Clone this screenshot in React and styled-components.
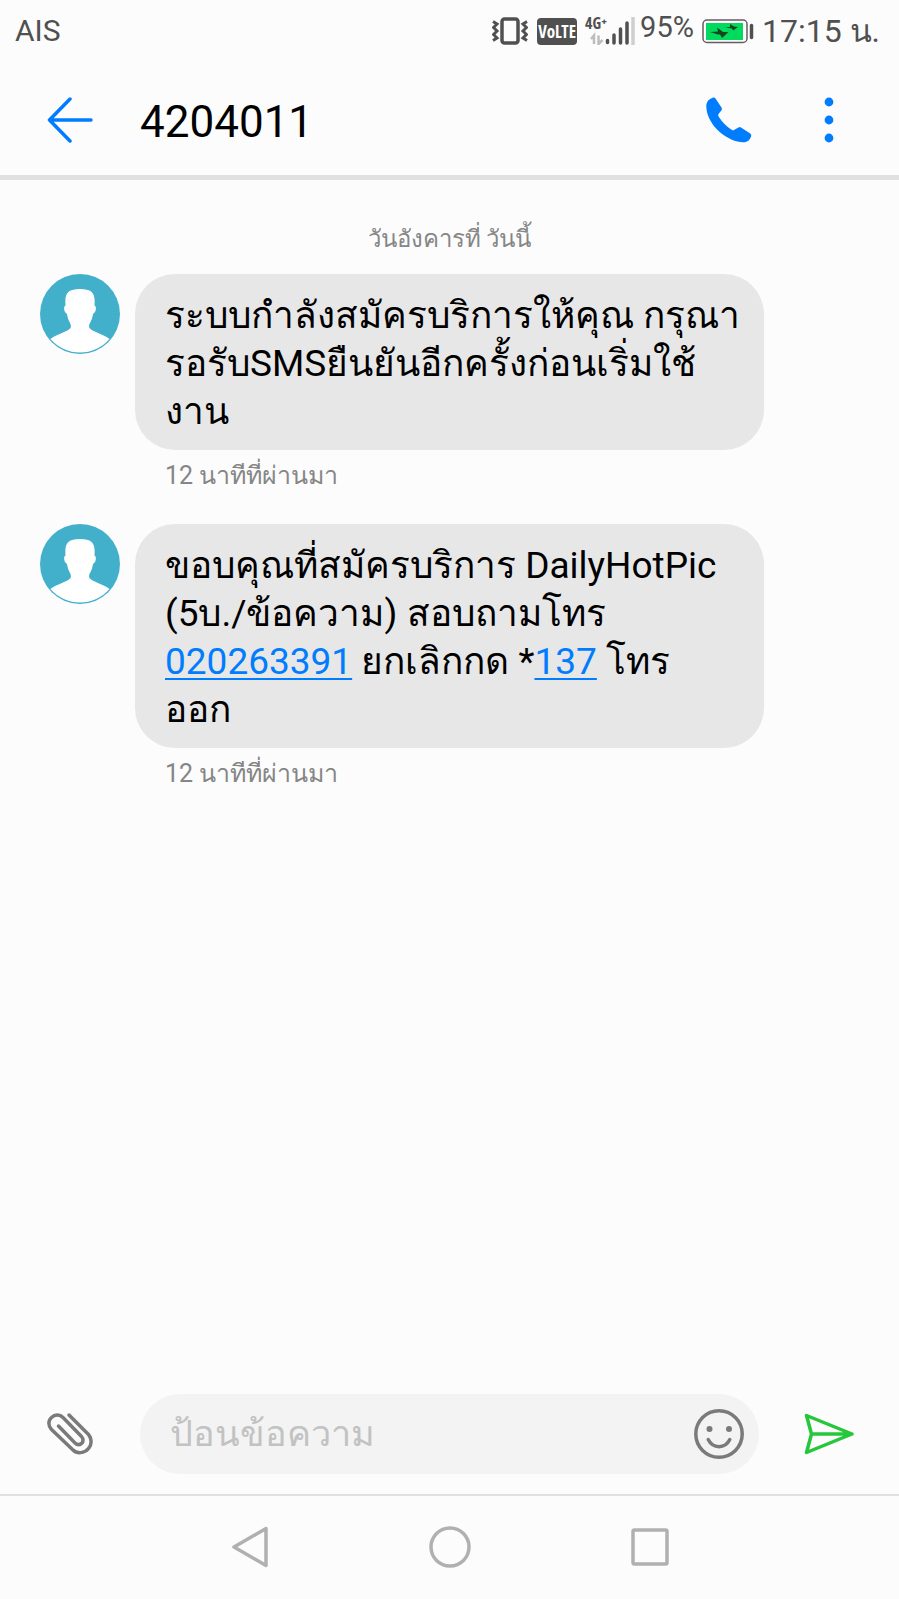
import React, { useState } from 'react';
import styled, { createGlobalStyle } from 'styled-components';

const GlobalStyle = createGlobalStyle`
  * {
    box-sizing: border-box;
  }
  body {
    margin: 0;
    background-color: #fcfcfc;
    font-family: Roboto, sans-serif;
    color: #000;
  }
`;

const Screen = styled.div`
  display: flex;
  flex-direction: column;
  min-height: 100vh;
`;

const StatusBar = styled.div`
  display: flex;
  justify-content: space-between;
  align-items: center;
  height: 64px;
  padding: 0 19px 2px 15px;
  color: #505050;
  font-size: 30px;
  line-height: 36px;
`;

const StatusGroup = styled.div`
  display: flex;
  align-items: center;
`;

const VibrateIcon = styled.svg`
  width: 36px;
  height: 28px;
  margin-right: 9px;
`;

const VolteBadge = styled.span`
  width: 40px;
  height: 27px;
  margin-right: 8px;
  border-radius: 4px;
  background-color: #505050;
  color: #fff;
  font-family: "Open Sans Condensed", "Open Sans", sans-serif;
  font-size: 17px;
  font-weight: 800;
  line-height: 27px;
  text-align: center;
`;

const Network = styled.div`
  position: relative;
  width: 50px;
  height: 28px;
  margin-right: 5px;
`;

const NetworkType = styled.span`
  position: absolute;
  top: -4px;
  left: 0;
  font-family: "Open Sans Condensed", "Open Sans", sans-serif;
  font-size: 16px;
  font-weight: 700;
  line-height: 20px;
`;

const Percent = styled.span`
  padding-bottom: 8px;
  font-size: 29px;
`;

const BatteryIcon = styled.svg`
  width: 52px;
  height: 25px;
  margin: 0 8px;
`;

const Clock = styled.span`
  font-size: 32px;
`;

const Header = styled.header`
  display: flex;
  align-items: center;
  height: 116px;
  padding: 0 40px;
  border-bottom: 5px solid #e0e0e0;
`;

const IconButton = styled.button`
  display: flex;
  justify-content: center;
  align-items: center;
  flex: none;
  width: 60px;
  height: 60px;
  padding: 0;
  border: 0;
  background: none;
  cursor: pointer;
`;

const Title = styled.h1`
  flex: 1;
  margin: 0 0 0 40px;
  padding-top: 4px;
  font-size: 44px;
  font-weight: 400;
  line-height: 52px;
`;

const HeaderActions = styled.div`
  display: flex;
  gap: 40px;
`;

const Messages = styled.main`
  flex: 1;
  padding: 43px 40px 0;
`;

const DateLabel = styled.div`
  margin-bottom: 19px;
  color: #868686;
  font-size: 24px;
  line-height: 32px;
  text-align: center;
`;

const MessageRow = styled.div`
  display: flex;
  align-items: flex-start;
  gap: 15px;
  margin-bottom: 32px;
`;

const Avatar = styled.svg`
  flex: none;
  width: 80px;
  height: 80px;
`;

const MessageBody = styled.div`
  flex: 1;
  margin-right: 95px;
`;

const Bubble = styled.p`
  margin: 0;
  padding: 18px 20px 14px 30px;
  border-radius: 40px;
  background-color: #e7e7e7;
  font-size: 37px;
  line-height: 48px;
  white-space: pre-line;
`;

const PhoneLink = styled.a`
  color: #007dff;
  text-decoration: underline;
  text-decoration-thickness: 2px;
  text-underline-offset: 4px;
`;

const Timestamp = styled.div`
  padding: 10px 30px 0;
  color: #868686;
  font-size: 25px;
  line-height: 32px;
`;

const Composer = styled.form`
  display: flex;
  align-items: center;
  padding: 0 40px 20px;
`;

const Field = styled.div`
  display: flex;
  align-items: center;
  flex: 1;
  height: 80px;
  margin: 0 40px;
  padding: 0 10px 0 30px;
  border-radius: 40px;
  background-color: #f3f3f3;
`;

const Input = styled.input`
  flex: 1;
  min-width: 0;
  height: 60px;
  padding: 0;
  border: 0;
  outline: 0;
  background: none;
  font-family: inherit;
  font-size: 36px;
  &::placeholder {
    color: #c2c2c2;
  }
`;

const NavBar = styled.nav`
  display: flex;
  justify-content: center;
  align-items: center;
  gap: 140px;
  height: 105px;
  padding-bottom: 2px;
  border-top: 2px solid #e0e0e0;
`;

const messages = [
  {
    id: 1,
    time: '12 นาทีที่ผ่านมา',
    content: 'ระบบกำลังสมัครบริการให้คุณ กรุณา\nรอรับSMSยืนยันอีกครั้งก่อนเริ่มใช้\nงาน',
  },
  {
    id: 2,
    time: '12 นาทีที่ผ่านมา',
    content: (
      <>
        {'ขอบคุณที่สมัครบริการ DailyHotPic\n(5บ./ข้อความ) สอบถามโทร\n'}
        <PhoneLink href="tel:020263391">020263391</PhoneLink>
        {' ยกเลิกกด *'}
        <PhoneLink href="tel:137">137</PhoneLink>
        {' โทร\nออก'}
      </>
    ),
  },
];

const Message = ({ content, time }) => (
  <MessageRow>
    <Avatar viewBox="0 0 80 80" aria-hidden="true">
      <circle cx="40" cy="40" r="40" fill="#43b0cb" />
      <path
        fill="#fff"
        d="M10.500 65C18 59.500 27 58 30.500 54C31.500 52 30.500 50 29.500 48C28 45.500 27.500 42.500 27 40C24.500 39 23.500 34 24.500 32.500C25 31.500 25.500 32 25.500 31C24.500 19 28 15 40 15C52 15 55.500 19 54.500 31C54.500 32 55 31.500 55.500 32.500C56.500 34 55.500 39 53 40C52.500 42.500 52 45.500 50.500 48C49.500 50 48.500 52 49.500 54C53 58 62 59.500 69.500 65A39 39 0 0 1 10.500 65Z"
      />
    </Avatar>
    <MessageBody>
      <Bubble>{content}</Bubble>
      <Timestamp>{time}</Timestamp>
    </MessageBody>
  </MessageRow>
);

const App = () => {
  const [text, setText] = useState('');
  return (
    <>
      <GlobalStyle />
      <Screen>
        <StatusBar>
          <span>AIS</span>
          <StatusGroup>
            <VibrateIcon viewBox="0 0 36 28" fill="none" stroke="#505050" aria-hidden="true">
              <rect x="10" y="2" width="16" height="24" rx="2.500" strokeWidth="3.500" />
              <path d="M1 4.500L5 7L1.500 10.500L5 14L1.500 17.500L5 21L1 23.500" strokeWidth="3" />
              <path d="M35 4.500L31 7L34.500 10.500L31 14L34.500 17.500L31 21L35 23.500" strokeWidth="3" />
            </VibrateIcon>
            <VolteBadge>VoLTE</VolteBadge>
            <Network>
              <svg width="50" height="28" viewBox="0 0 50 28" aria-hidden="true">
                <path d="M6 22L9 18.500V27M13.500 18.500V27L17.500 23" stroke="#bdbdbd" strokeWidth="2.500" fill="none" />
                <path d="M22.500 23.500v2M29 18v8M35.500 12v14M42 6v20" stroke="#505050" strokeWidth="3.500" strokeLinecap="round" />
                <path d="M48 0v28" stroke="#cfcfcf" strokeWidth="3.500" />
              </svg>
              <NetworkType>4G⁺</NetworkType>
            </Network>
            <Percent>95%</Percent>
            <BatteryIcon viewBox="0 0 52 25" aria-hidden="true">
              <rect x="1" y="1" width="44" height="22.500" rx="4" fill="#fff" stroke="#6a5a60" strokeWidth="1.500" />
              <rect x="4" y="4" width="37" height="17" fill="#00db5e" />
              <path d="M8 13L16 12.500L15 8.500L21 13L26.500 13L20 19L18 15.500L16 15.500Z" fill="#16441f" />
              <path d="M23 8.500L28 8L28 5L32 7.500L36 8L31 11.500L30 9.500Z" fill="#16441f" />
              <path d="M49.500 6.500v12" stroke="#505050" strokeWidth="3.500" strokeLinecap="round" />
            </BatteryIcon>
            <Clock>17:15 น.</Clock>
          </StatusGroup>
        </StatusBar>

        <Header>
          <IconButton aria-label="Back">
            <svg width="46" height="46" viewBox="0 0 46 46" fill="none" stroke="#007dff" strokeWidth="3.500" strokeLinecap="round" strokeLinejoin="round">
              <path d="M23 2L2.500 23L23 44M2.500 23H44" />
            </svg>
          </IconButton>
          <Title>4204011</Title>
          <HeaderActions>
            <IconButton aria-label="Call">
              <svg width="46" height="46" viewBox="0 0 46 46" fill="#007dff">
                <path d="M6.500 0.800Q8.500 0 9.500 1.500L15.500 10.500Q16.500 12 15.500 13.300L12.500 17Q11.700 18.200 12.600 19.600C16 25 20.500 29.700 26 33Q27.300 33.800 28.400 32.800L32.500 30.500Q33.800 29.700 35 30.600L44.200 36.600Q45.700 37.700 45.200 39.200C43.500 44 40.500 45.500 36.500 45.300C17 43.500 0.500 25 0.300 9.500C0.300 5 2.500 2.500 6.500 0.800Z" />
              </svg>
            </IconButton>
            <IconButton aria-label="More options">
              <svg width="10" height="46" viewBox="0 0 10 46" fill="#007dff">
                <circle cx="5" cy="5" r="4.400" />
                <circle cx="5" cy="23" r="4.400" />
                <circle cx="5" cy="41" r="4.400" />
              </svg>
            </IconButton>
          </HeaderActions>
        </Header>

        <Messages>
          <DateLabel>วันอังคารที่ วันนี้</DateLabel>
          {messages.map(message => (
            <Message key={message.id} content={message.content} time={message.time} />
          ))}
        </Messages>

        <Composer onSubmit={e => e.preventDefault()}>
          <IconButton type="button" aria-label="Attach">
            <svg width="46" height="44" viewBox="0 0 46 44" fill="none" stroke="#7a7a7a" strokeWidth="3.500" strokeLinecap="round" strokeLinejoin="round">
              <path d="M22 3L41.500 22.500C45 26.500 45 32.500 41.500 36.500C37.500 41.500 30 42 26 38L4.500 17.500C1 14 1 8.500 4.500 5.500C8 2 13 2.500 16 5.500L34.500 24.500C36.500 27 36.500 29.500 34.500 31.500C32.500 33 30 33 28 31L11.500 14" />
            </svg>
          </IconButton>
          <Field>
            <Input
              aria-label="ป้อนข้อความ"
              placeholder="ป้อนข้อความ"
              value={text}
              onChange={e => setText(e.target.value)}
            />
            <IconButton type="button" aria-label="Emoji">
              <svg width="50" height="50" viewBox="0 0 50 50" fill="none" stroke="#7a7a7a" strokeWidth="3.500" strokeLinecap="round">
                <circle cx="25" cy="25" r="23.200" />
                <path d="M14.200 30.500C19 40 31 40 35.800 30.500" />
                <circle cx="15.500" cy="20" r="3" fill="#7a7a7a" stroke="none" />
                <circle cx="35" cy="20" r="3" fill="#7a7a7a" stroke="none" />
              </svg>
            </IconButton>
          </Field>
          <IconButton type="submit" aria-label="Send">
            <svg width="50" height="42" viewBox="0 0 50 42" fill="none" stroke="#27c73b" strokeWidth="3.500" strokeLinecap="round" strokeLinejoin="round">
              <path d="M2.500 2.500L48 21L2.500 39.500L7.500 21ZM7.500 21H48" />
            </svg>
          </IconButton>
        </Composer>

        <NavBar>
          <IconButton aria-label="Navigate back">
            <svg width="38" height="42" viewBox="0 0 38 42" fill="none" stroke="#b0b0b0" strokeWidth="3.500" strokeLinejoin="round">
              <path d="M35 2.500V39.500L3 21Z" />
            </svg>
          </IconButton>
          <IconButton aria-label="Home">
            <svg width="42" height="42" viewBox="0 0 42 42" fill="none" stroke="#b0b0b0" strokeWidth="3.500">
              <circle cx="21" cy="21" r="19" />
            </svg>
          </IconButton>
          <IconButton aria-label="Recent apps">
            <svg width="38" height="38" viewBox="0 0 38 38" fill="none" stroke="#b0b0b0" strokeWidth="3.500">
              <rect x="2" y="2" width="34" height="34" rx="1.500" />
            </svg>
          </IconButton>
        </NavBar>
      </Screen>
    </>
  );
};

export default App;
